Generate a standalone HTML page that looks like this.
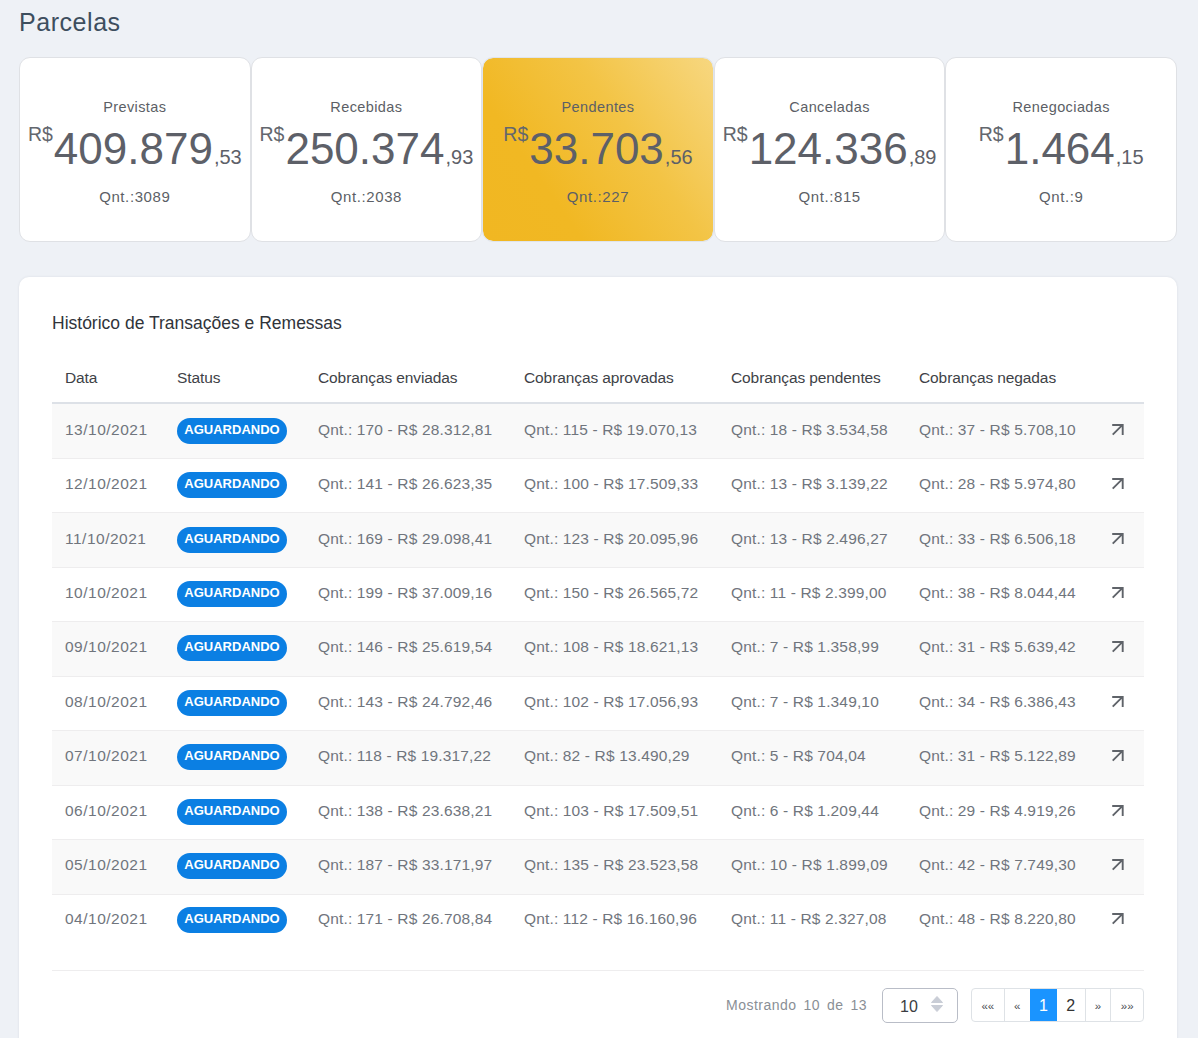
<!DOCTYPE html>
<html><head><meta charset="utf-8">
<style>
*{box-sizing:border-box;margin:0;padding:0}
html,body{width:1198px;height:1038px;overflow:hidden}
body{background:#eef1f6;font-family:"Liberation Sans",sans-serif;position:relative;color:#555}
.title{position:absolute;left:19px;top:7px;font-size:25px;letter-spacing:0.55px;color:#3d4e5e;line-height:30px}
.card{position:absolute;top:57px;height:185px;width:231.6px;background:#fff;border:1px solid #dfe1e5;border-radius:11px;text-align:center}
.card .lbl{position:absolute;left:0;right:0;top:40px;font-size:14.5px;letter-spacing:0.4px;color:#5c5f66;line-height:18px}
.card .val{position:absolute;left:0;right:0;top:68px;white-space:nowrap;color:#5d6068;line-height:46px}
.card .cur{font-size:19.5px;vertical-align:top;position:relative;top:-15px;margin-right:1px;color:#63676e}
.card .big{font-size:44px;letter-spacing:0px}
.card .cts{font-size:20px;margin-left:1px}
.card .qnt{position:absolute;left:0;right:0;top:130px;font-size:15px;letter-spacing:0.6px;color:#5c5f66;line-height:18px}
.card.pend{background:linear-gradient(235deg,#f7d780 0%,#f3c445 38%,#f1b823 72%,#f1b722 100%);background-clip:padding-box;border-color:#dfe4ec}
.panel{position:absolute;left:19px;top:277px;width:1158px;height:800px;background:#fff;border-radius:10px;box-shadow:0 0 2.5px rgba(40,50,70,0.10)}
.h2{position:absolute;left:52px;top:313px;font-size:17.5px;color:#30343a;line-height:21px}
.th{position:absolute;top:369px;font-size:15.5px;color:#3e4247;line-height:17px;letter-spacing:-0.1px}
.hline{position:absolute;left:52px;width:1092px;top:402px;height:2px;background:#dde1e7}
.row{position:absolute;left:52px;width:1092px;border-top:1px solid #eeedee;background:#fff}
.row.odd{background:#f9f9f9}
.row span{position:absolute;top:17px;font-size:15.5px;line-height:17px;color:#70757d;white-space:nowrap;letter-spacing:0.15px}
.row .c0{left:13px;letter-spacing:0.5px}
.row .badge{left:125px;top:14px;width:110px;height:26px;border-radius:13px;background:#0b7fe3;color:#fff;font-weight:bold;font-size:13px;line-height:24px;text-align:center;letter-spacing:0px}
.row .c2{left:266px}
.row .c3{left:472px}
.row .c4{left:679px}
.row .c5{left:867px}
.row .arr{position:absolute;left:1060px;top:19px}
.bline{position:absolute;left:52px;width:1092px;top:970px;height:1px;background:#eeedee}
.most{position:absolute;left:726px;top:997px;font-size:14px;color:#8a8f96;line-height:16px;word-spacing:2.5px;letter-spacing:0.5px}
.sel{position:absolute;left:882px;top:988px;width:76px;height:35px;border:1.5px solid #b9bdc7;border-radius:5px;background:#fff}
.sel .v{position:absolute;left:17px;top:9px;font-size:16px;color:#3a3d42;line-height:18px}
.pag{position:absolute;left:971px;top:988px;width:173px;height:34px;border:1px solid #dee2e6;border-radius:4px;background:#fff;overflow:hidden}
.pag div{position:absolute;top:0;height:32px;border-left:1px solid #dee2e6;text-align:center;line-height:32px;color:#333}
</style></head><body>
<div class="title">Parcelas</div>

<div class="card" style="left:19px"><div class="lbl">Previstas</div><div class="val"><span class="cur">R$</span><span class="big">409.879</span><span class="cts">,53</span></div><div class="qnt">Qnt.:3089</div></div>
<div class="card" style="left:250.6px"><div class="lbl">Recebidas</div><div class="val"><span class="cur">R$</span><span class="big">250.374</span><span class="cts">,93</span></div><div class="qnt">Qnt.:2038</div></div>
<div class="card pend" style="left:482.2px"><div class="lbl">Pendentes</div><div class="val"><span class="cur">R$</span><span class="big">33.703</span><span class="cts">,56</span></div><div class="qnt">Qnt.:227</div></div>
<div class="card" style="left:713.8px"><div class="lbl">Canceladas</div><div class="val"><span class="cur">R$</span><span class="big">124.336</span><span class="cts">,89</span></div><div class="qnt">Qnt.:815</div></div>
<div class="card" style="left:945.4px"><div class="lbl">Renegociadas</div><div class="val"><span class="cur">R$</span><span class="big">1.464</span><span class="cts">,15</span></div><div class="qnt">Qnt.:9</div></div>

<div class="panel"></div>
<div class="h2">Histórico de Transações e Remessas</div>
<div class="th" style="left:65px">Data</div>
<div class="th" style="left:177px">Status</div>
<div class="th" style="left:318px">Cobranças enviadas</div>
<div class="th" style="left:524px">Cobranças aprovadas</div>
<div class="th" style="left:731px">Cobranças pendentes</div>
<div class="th" style="left:919px">Cobranças negadas</div>
<div class="row odd" style="top:403px;height:55px"><span class="c0" style="top:17px">13/10/2021</span><span class="badge" style="top:14px">AGUARDANDO</span><span class="c2" style="top:17px">Qnt.: 170 - R$ 28.312,81</span><span class="c3" style="top:17px">Qnt.: 115 - R$ 19.070,13</span><span class="c4" style="top:17px">Qnt.: 18 - R$ 3.534,58</span><span class="c5" style="top:17px">Qnt.: 37 - R$ 5.708,10</span><svg class="arr" style="top:19px" width="14" height="14" viewBox="0 0 14 14"><path d="M0.7 11.6 L10 2.3 M0.2 2 H10.7 V12" fill="none" stroke="#5f6369" stroke-width="1.9"/></svg></div>
<div class="row" style="top:458px;height:54px"><span class="c0" style="top:16px">12/10/2021</span><span class="badge" style="top:13px">AGUARDANDO</span><span class="c2" style="top:16px">Qnt.: 141 - R$ 26.623,35</span><span class="c3" style="top:16px">Qnt.: 100 - R$ 17.509,33</span><span class="c4" style="top:16px">Qnt.: 13 - R$ 3.139,22</span><span class="c5" style="top:16px">Qnt.: 28 - R$ 5.974,80</span><svg class="arr" style="top:18px" width="14" height="14" viewBox="0 0 14 14"><path d="M0.7 11.6 L10 2.3 M0.2 2 H10.7 V12" fill="none" stroke="#5f6369" stroke-width="1.9"/></svg></div>
<div class="row odd" style="top:512px;height:55px"><span class="c0" style="top:17px">11/10/2021</span><span class="badge" style="top:14px">AGUARDANDO</span><span class="c2" style="top:17px">Qnt.: 169 - R$ 29.098,41</span><span class="c3" style="top:17px">Qnt.: 123 - R$ 20.095,96</span><span class="c4" style="top:17px">Qnt.: 13 - R$ 2.496,27</span><span class="c5" style="top:17px">Qnt.: 33 - R$ 6.506,18</span><svg class="arr" style="top:19px" width="14" height="14" viewBox="0 0 14 14"><path d="M0.7 11.6 L10 2.3 M0.2 2 H10.7 V12" fill="none" stroke="#5f6369" stroke-width="1.9"/></svg></div>
<div class="row" style="top:567px;height:54px"><span class="c0" style="top:16px">10/10/2021</span><span class="badge" style="top:13px">AGUARDANDO</span><span class="c2" style="top:16px">Qnt.: 199 - R$ 37.009,16</span><span class="c3" style="top:16px">Qnt.: 150 - R$ 26.565,72</span><span class="c4" style="top:16px">Qnt.: 11 - R$ 2.399,00</span><span class="c5" style="top:16px">Qnt.: 38 - R$ 8.044,44</span><svg class="arr" style="top:18px" width="14" height="14" viewBox="0 0 14 14"><path d="M0.7 11.6 L10 2.3 M0.2 2 H10.7 V12" fill="none" stroke="#5f6369" stroke-width="1.9"/></svg></div>
<div class="row odd" style="top:621px;height:55px"><span class="c0" style="top:16px">09/10/2021</span><span class="badge" style="top:13px">AGUARDANDO</span><span class="c2" style="top:16px">Qnt.: 146 - R$ 25.619,54</span><span class="c3" style="top:16px">Qnt.: 108 - R$ 18.621,13</span><span class="c4" style="top:16px">Qnt.: 7 - R$ 1.358,99</span><span class="c5" style="top:16px">Qnt.: 31 - R$ 5.639,42</span><svg class="arr" style="top:18px" width="14" height="14" viewBox="0 0 14 14"><path d="M0.7 11.6 L10 2.3 M0.2 2 H10.7 V12" fill="none" stroke="#5f6369" stroke-width="1.9"/></svg></div>
<div class="row" style="top:676px;height:54px"><span class="c0" style="top:16px">08/10/2021</span><span class="badge" style="top:13px">AGUARDANDO</span><span class="c2" style="top:16px">Qnt.: 143 - R$ 24.792,46</span><span class="c3" style="top:16px">Qnt.: 102 - R$ 17.056,93</span><span class="c4" style="top:16px">Qnt.: 7 - R$ 1.349,10</span><span class="c5" style="top:16px">Qnt.: 34 - R$ 6.386,43</span><svg class="arr" style="top:18px" width="14" height="14" viewBox="0 0 14 14"><path d="M0.7 11.6 L10 2.3 M0.2 2 H10.7 V12" fill="none" stroke="#5f6369" stroke-width="1.9"/></svg></div>
<div class="row odd" style="top:730px;height:55px"><span class="c0" style="top:16px">07/10/2021</span><span class="badge" style="top:13px">AGUARDANDO</span><span class="c2" style="top:16px">Qnt.: 118 - R$ 19.317,22</span><span class="c3" style="top:16px">Qnt.: 82 - R$ 13.490,29</span><span class="c4" style="top:16px">Qnt.: 5 - R$ 704,04</span><span class="c5" style="top:16px">Qnt.: 31 - R$ 5.122,89</span><svg class="arr" style="top:18px" width="14" height="14" viewBox="0 0 14 14"><path d="M0.7 11.6 L10 2.3 M0.2 2 H10.7 V12" fill="none" stroke="#5f6369" stroke-width="1.9"/></svg></div>
<div class="row" style="top:785px;height:54px"><span class="c0" style="top:16px">06/10/2021</span><span class="badge" style="top:13px">AGUARDANDO</span><span class="c2" style="top:16px">Qnt.: 138 - R$ 23.638,21</span><span class="c3" style="top:16px">Qnt.: 103 - R$ 17.509,51</span><span class="c4" style="top:16px">Qnt.: 6 - R$ 1.209,44</span><span class="c5" style="top:16px">Qnt.: 29 - R$ 4.919,26</span><svg class="arr" style="top:18px" width="14" height="14" viewBox="0 0 14 14"><path d="M0.7 11.6 L10 2.3 M0.2 2 H10.7 V12" fill="none" stroke="#5f6369" stroke-width="1.9"/></svg></div>
<div class="row odd" style="top:839px;height:55px"><span class="c0" style="top:16px">05/10/2021</span><span class="badge" style="top:13px">AGUARDANDO</span><span class="c2" style="top:16px">Qnt.: 187 - R$ 33.171,97</span><span class="c3" style="top:16px">Qnt.: 135 - R$ 23.523,58</span><span class="c4" style="top:16px">Qnt.: 10 - R$ 1.899,09</span><span class="c5" style="top:16px">Qnt.: 42 - R$ 7.749,30</span><svg class="arr" style="top:18px" width="14" height="14" viewBox="0 0 14 14"><path d="M0.7 11.6 L10 2.3 M0.2 2 H10.7 V12" fill="none" stroke="#5f6369" stroke-width="1.9"/></svg></div>
<div class="row" style="top:894px;height:76px"><span class="c0" style="top:15px">04/10/2021</span><span class="badge" style="top:12px">AGUARDANDO</span><span class="c2" style="top:15px">Qnt.: 171 - R$ 26.708,84</span><span class="c3" style="top:15px">Qnt.: 112 - R$ 16.160,96</span><span class="c4" style="top:15px">Qnt.: 11 - R$ 2.327,08</span><span class="c5" style="top:15px">Qnt.: 48 - R$ 8.220,80</span><svg class="arr" style="top:17px" width="14" height="14" viewBox="0 0 14 14"><path d="M0.7 11.6 L10 2.3 M0.2 2 H10.7 V12" fill="none" stroke="#5f6369" stroke-width="1.9"/></svg></div>
<div class="hline"></div>
<div class="bline"></div>
<div class="most">Mostrando 10 de 13</div>
<div class="sel"><span class="v">10</span><svg style="position:absolute;left:47px;top:6px" width="14" height="18" viewBox="0 0 14 18"><path d="M7 1.5 L12.5 7.5 H1.5 Z M7 16.5 L12.5 10.5 H1.5 Z" fill="#c9cdd6" stroke="#c9cdd6" stroke-width="1" stroke-linejoin="round"/></svg></div>
<div class="pag">
<div style="left:0;width:31.6px;border-left:none;font-size:11.5px;line-height:34px;color:#4a4d52">««</div>
<div style="left:31.6px;width:26.4px;font-size:11.5px;line-height:34px;color:#4a4d52">«</div>
<div style="left:58px;width:27px;background:#1a94ff;color:#fff;font-size:16px;border-left:none;line-height:33px">1</div>
<div style="left:85px;width:27.5px;font-size:16px;border-left:none;line-height:33px">2</div>
<div style="left:112.6px;width:25.7px;font-size:11.5px;line-height:34px;color:#4a4d52">»</div>
<div style="left:138.3px;width:32.7px;font-size:11.5px;line-height:34px;color:#4a4d52">»»</div>
</div>
</body></html>
